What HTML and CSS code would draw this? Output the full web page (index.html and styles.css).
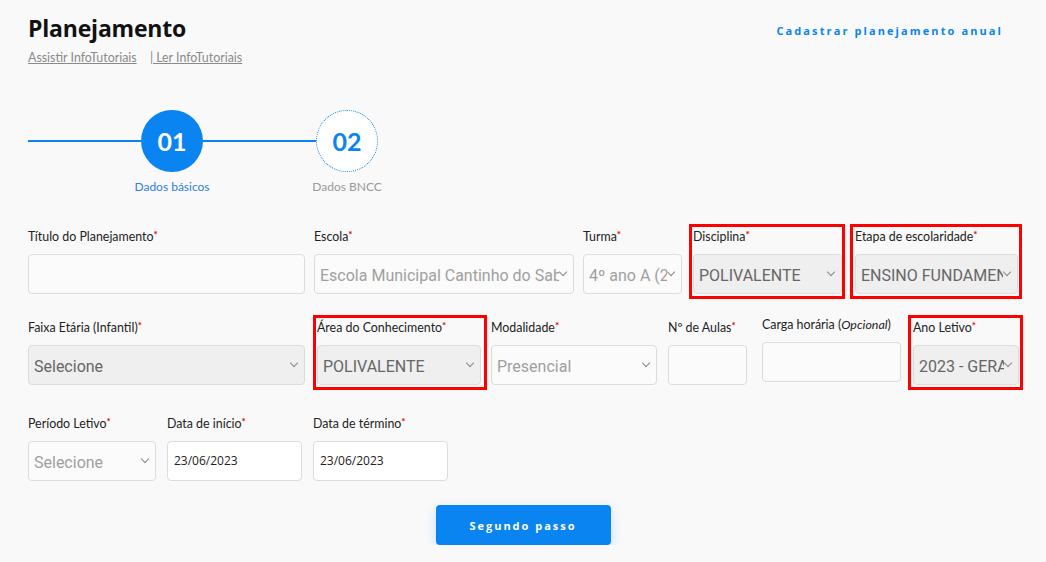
FILE: index.html
```html
<!DOCTYPE html>
<html>
	<head>
		<meta charset="UTF-8">
		<title>Planejamento</title>
		<link rel="stylesheet" href="styles.css">
	</head>
	<body>
		<div class="top">
			<div class="titlebox">
				<h1 class="title">Planejamento</h1>
				<div class="tuts">
					<a href="#">Assistir InfoTutoriais</a>
					<a href="#" class="ler">| Ler InfoTutoriais</a>
				</div>
			</div>
			<a href="#" class="anual">Cadastrar planejamento anual</a>
		</div>

		<div class="steps">
			<div class="line"></div>
			<div class="step on">
				<div class="circle">01</div>
				<div class="slabel">Dados básicos</div>
			</div>
			<div class="line"></div>
			<div class="step">
				<div class="circle">02</div>
				<div class="slabel">Dados BNCC</div>
			</div>
		</div>

		<div class="row r1">
			<div class="field c-titulo">
				<label>Título do Planejamento<i>*</i></label>
				<div class="inp"></div>
			</div>
			<div class="field c-escola">
				<label>Escola<i>*</i></label>
				<div class="sel light"><span>Escola Municipal Cantinho do Saber</span><b></b></div>
			</div>
			<div class="field c-turma">
				<label>Turma<i>*</i></label>
				<div class="sel light"><span>4º ano A (2023)</span><b></b></div>
			</div>
			<div class="field c-disc hl">
				<label>Disciplina<i>*</i></label>
				<div class="sel dis"><span>POLIVALENTE</span><b></b></div>
			</div>
			<div class="field c-etapa hl">
				<label>Etapa de escolaridade<i>*</i></label>
				<div class="sel dis"><span>ENSINO FUNDAMENTAL</span><b></b></div>
			</div>
		</div>

		<div class="row r2">
			<div class="field c-faixa">
				<label>Faixa Etária (Infantil)<i>*</i></label>
				<div class="sel dis"><span>Selecione</span><b></b></div>
			</div>
			<div class="field c-area hl">
				<label>Área do Conhecimento<i>*</i></label>
				<div class="sel dis"><span>POLIVALENTE</span><b></b></div>
			</div>
			<div class="field c-mod">
				<label>Modalidade<i>*</i></label>
				<div class="sel light"><span>Presencial</span><b></b></div>
			</div>
			<div class="field c-aulas">
				<label>Nº de Aulas<i>*</i></label>
				<div class="inp"></div>
			</div>
			<div class="field c-carga">
				<label>Carga horária (<em>Opcional</em>)</label>
				<div class="inp"></div>
			</div>
			<div class="field c-ano hl">
				<label>Ano Letivo<i>*</i></label>
				<div class="sel dis"><span>2023 - GERAL</span><b></b></div>
			</div>
		</div>

		<div class="row r3">
			<div class="field c-periodo">
				<label>Período Letivo<i>*</i></label>
				<div class="sel light"><span>Selecione</span><b></b></div>
			</div>
			<div class="field c-inicio">
				<label>Data de início<i>*</i></label>
				<div class="inp date">23/06/2023</div>
			</div>
			<div class="field c-termino">
				<label>Data de término<i>*</i></label>
				<div class="inp date">23/06/2023</div>
			</div>
		</div>

		<div class="actions">
			<a href="#" class="btn">Segundo passo</a>
		</div>
	</body>
</html>
```

FILE: styles.css
```css
*{
	margin:0;padding:0;
	box-sizing:border-box;
}
body{
	background:#f9f9f9;
	font-family:Lato,"Open Sans",sans-serif;
	color:#333;
	padding:0 28px;
}
a{
	text-decoration:none;
}
.top{
	display:flex;
	justify-content:space-between;
	padding-top:12px;
}
.title{
	font-family:"Open Sans",sans-serif;
	font-size:23px;
	font-weight:700;
	line-height:32px;
	color:#111;
	letter-spacing:-0.2px;
}
.tuts{
	margin-top:7px;
	font-size:12.4px;
	line-height:14px;
}
.tuts a{
	color:#8a8a8a;
	text-decoration:underline;
}
.tuts .ler{
	margin-left:10px;
}
.anual{
	margin-top:11px;
	margin-right:15px;
	font-family:"Open Sans",sans-serif;
	font-size:11px;
	font-weight:700;
	letter-spacing:2.1px;
	color:#0a84f0;
	height:16px;
}
/*steps*/
.steps{
	display:flex;
	align-items:flex-start;
	margin-top:45px;
}
.line{
	width:113px;
	height:2px;
	background:#0a84f0;
	margin-top:30px;
}
.step{
	width:62px;
	display:flex;
	flex-direction:column;
	align-items:center;
}
.circle{
	width:62px;
	height:62px;
	border-radius:50%;
	border:1px dotted #0a84f0;
	background:#fff;
	color:#0a84f0;
	font-size:25px;
	font-weight:700;
	display:flex;
	align-items:center;
	justify-content:center;
}
.step.on .circle{
	background:#0a84f0;
	color:#fff;
	border-color:#0a84f0;
}
.slabel{
	margin-top:8px;
	font-size:12px;
	line-height:14px;
	white-space:nowrap;
	color:#999;
}
.step.on .slabel{
	color:#2f7fe0;
}
/*form*/
.row{
	display:flex;
	align-items:flex-start;
}
.r1{margin-top:32px;}
.r2{margin-top:23px;}
.r3{margin-top:28px;}
.field{
	position:relative;
	flex:none;
}
.field label{
	display:block;
	font-size:12.4px;
	line-height:16px;
	color:#222;
	white-space:nowrap;
	margin-bottom:9px;
}
.field label i{
	font-style:normal;
	font-weight:700;
	color:#e00;
	font-size:10px;
	vertical-align:3px;
}
.field label em{
	font-style:italic;
}
.hl::after{
	content:"";
	position:absolute;
	top:-2px;left:-4px;right:-3px;bottom:-5px;
	border:3px solid #f00;
	pointer-events:none;
}
.c-area.hl::after{right:-6px;}
.c-ano.hl::after{left:-5px;right:-4px;}
.c-etapa.hl::after{left:-5px;right:-4px;}
.inp,.sel{
	height:40px;
	border:1px solid #dcdcdc;
	border-radius:4px;
	background:#fbfbfb;
}
.inp.date{
	font-family:"Open Sans",sans-serif;
	font-size:12px;
	color:#222;
	line-height:38px;
	padding-left:6px;
	background:#fff;
}
.sel{
	display:flex;
	align-items:center;
	padding:0 3px 0 5px;
	font-family:Roboto,sans-serif;
	font-size:16px;
}
.sel span{
	flex:1;
	overflow:hidden;
	white-space:nowrap;
	padding-top:2px;
}
.sel b{
	width:6px;
	height:6px;
	border-right:1px solid #888;
	border-bottom:1px solid #888;
	transform:rotate(45deg);
	margin:0 4px 4px 1px;
	flex:none;
}
.sel.light{
	color:#a0a0a0;
	background:#fbfbfb;
}
.sel.dis{
	color:#666;
	background:#efefef;
}
.c-titulo{width:277px;}
.c-escola{width:260px;margin-left:9px;}
.c-turma{width:99px;margin-left:9px;}
.c-disc{width:149px;margin-left:11px;}
.c-etapa{width:163px;margin-left:13px;}
.c-faixa{width:277px;}
.c-area{width:164px;margin-left:12px;}
.c-mod{width:166px;margin-left:10px;}
.c-aulas{width:79px;margin-left:11px;}
.c-carga{width:139px;margin-left:15px;}
.c-ano{width:106px;margin-left:12px;}
.c-periodo{width:128px;}
.c-inicio{width:135px;margin-left:11px;}
.c-termino{width:135px;margin-left:11px;}
.actions{
	display:flex;
	justify-content:center;
	margin-top:24px;
	margin-right:-28px;
	margin-left:-28px;
}
.btn{
	width:175px;
	height:40px;
	background:#0a84f0;
	color:#fff;
	border-radius:4px;
	font-family:"Open Sans",sans-serif;
	font-size:11px;
	font-weight:700;
	letter-spacing:2px;
	display:flex;
	align-items:center;
	justify-content:center;
	box-shadow:0 4px 12px rgba(10,132,240,0.2);
}
```
